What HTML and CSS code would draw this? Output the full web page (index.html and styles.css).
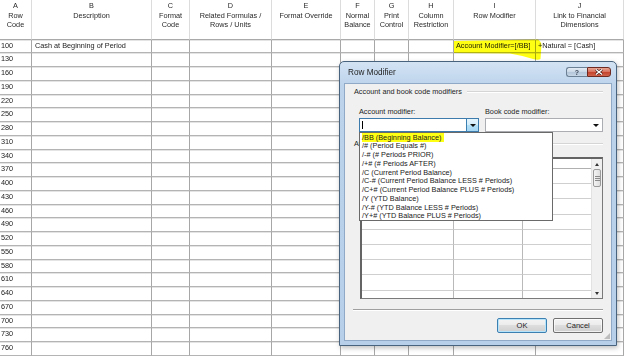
FILE: index.html
```html
<!DOCTYPE html>
<html lang="en">
<head>
    <meta charset="UTF-8">
    <title>Row Definition - Row Modifier</title>
    <link rel="stylesheet" href="styles.css">
</head>
<body>
    <!-- Row definition sheet -->
    <div class="sheet">
        <div class="sheet-row sheet-head">
            <span>A<br>Row<br>Code</span>
            <span>B<br>Description</span>
            <span>C<br>Format<br>Code</span>
            <span>D<br>Related Formulas /<br>Rows / Units</span>
            <span>E<br>Format Override</span>
            <span>F<br>Normal<br>Balance</span>
            <span>G<br>Print<br>Control</span>
            <span>H<br>Column<br>Restriction</span>
            <span>I<br>Row Modifier</span>
            <span>J<br>Link to Financial<br>Dimensions</span>
        </div>
        <div class="sheet-row"><span>100</span><span class="desc">Cash at Beginning of Period</span><span></span><span></span><span></span><span></span><span></span><span></span><span>Account Modifier=[/BB]</span><span>+Natural = [Cash]</span></div>
        <div class="sheet-row"><span>130</span><span></span><span></span><span></span><span></span><span></span><span></span><span></span><span></span><span></span></div>
        <div class="sheet-row"><span>160</span><span></span><span></span><span></span><span></span><span></span><span></span><span></span><span></span><span></span></div>
        <div class="sheet-row"><span>190</span><span></span><span></span><span></span><span></span><span></span><span></span><span></span><span></span><span></span></div>
        <div class="sheet-row"><span>220</span><span></span><span></span><span></span><span></span><span></span><span></span><span></span><span></span><span></span></div>
        <div class="sheet-row"><span>250</span><span></span><span></span><span></span><span></span><span></span><span></span><span></span><span></span><span></span></div>
        <div class="sheet-row"><span>280</span><span></span><span></span><span></span><span></span><span></span><span></span><span></span><span></span><span></span></div>
        <div class="sheet-row"><span>310</span><span></span><span></span><span></span><span></span><span></span><span></span><span></span><span></span><span></span></div>
        <div class="sheet-row"><span>340</span><span></span><span></span><span></span><span></span><span></span><span></span><span></span><span></span><span></span></div>
        <div class="sheet-row"><span>370</span><span></span><span></span><span></span><span></span><span></span><span></span><span></span><span></span><span></span></div>
        <div class="sheet-row"><span>400</span><span></span><span></span><span></span><span></span><span></span><span></span><span></span><span></span><span></span></div>
        <div class="sheet-row"><span>430</span><span></span><span></span><span></span><span></span><span></span><span></span><span></span><span></span><span></span></div>
        <div class="sheet-row"><span>460</span><span></span><span></span><span></span><span></span><span></span><span></span><span></span><span></span><span></span></div>
        <div class="sheet-row"><span>490</span><span></span><span></span><span></span><span></span><span></span><span></span><span></span><span></span><span></span></div>
        <div class="sheet-row"><span>520</span><span></span><span></span><span></span><span></span><span></span><span></span><span></span><span></span><span></span></div>
        <div class="sheet-row"><span>550</span><span></span><span></span><span></span><span></span><span></span><span></span><span></span><span></span><span></span></div>
        <div class="sheet-row"><span>580</span><span></span><span></span><span></span><span></span><span></span><span></span><span></span><span></span><span></span></div>
        <div class="sheet-row"><span>610</span><span></span><span></span><span></span><span></span><span></span><span></span><span></span><span></span><span></span></div>
        <div class="sheet-row"><span>640</span><span></span><span></span><span></span><span></span><span></span><span></span><span></span><span></span><span></span></div>
        <div class="sheet-row"><span>670</span><span></span><span></span><span></span><span></span><span></span><span></span><span></span><span></span><span></span></div>
        <div class="sheet-row"><span>700</span><span></span><span></span><span></span><span></span><span></span><span></span><span></span><span></span><span></span></div>
        <div class="sheet-row"><span>730</span><span></span><span></span><span></span><span></span><span></span><span></span><span></span><span></span><span></span></div>
        <div class="sheet-row"><span>760</span><span></span><span></span><span></span><span></span><span></span><span></span><span></span><span></span><span></span></div>
    </div>

    <!-- Highlighter stroke over the row modifier cell -->
    <svg class="marker" width="94" height="26" viewBox="0 0 94 26">
        <path d="M2,3 L86,1.5 Q89,3 89.5,7 L88.5,21 Q86,22.5 81,21 Q70,17.5 58,15.5 L2,15 Z" fill="#ffff14"/>
    </svg>

    <!-- Row Modifier dialog -->
    <div class="dialog">
        <div class="titlebar">
            <span class="title">Row Modifier</span>
            <div class="caption-btns">
                <span class="cap help">?</span>
                <span class="cap close">
                    <svg width="8" height="6" viewBox="0 0 8 6">
                        <path d="M1,0.5 L7,5.5 M7,0.5 L1,5.5" stroke="#3a1410" stroke-width="2.6"/>
                        <path d="M1,0.5 L7,5.5 M7,0.5 L1,5.5" stroke="#fff" stroke-width="1.4"/>
                    </svg>
                </span>
            </div>
        </div>

        <div class="client">
            <div class="group-head"><span>Account and book code modifiers</span></div>

            <div class="fields">
                <div class="field account">
                    <label>Account modifier:</label>
                    <div class="combo focused">
                        <span class="caret"></span>
                        <span class="drop-btn"><i class="arrow"></i></span>
                    </div>
                </div>
                <div class="field book">
                    <label>Book code modifier:</label>
                    <div class="combo">
                        <span class="drop-btn plain"><i class="arrow"></i></span>
                    </div>
                </div>
            </div>

            <div class="group-head second"><span>Attributes</span></div>

            <div class="attr-grid">
                <div class="attr-cells">
                    <div class="attr-row attr-head"><span></span><span></span><span></span></div>
                    <div class="attr-row"><span></span><span></span><span></span></div>
                    <div class="attr-row"><span></span><span></span><span></span></div>
                    <div class="attr-row"><span></span><span></span><span></span></div>
                    <div class="attr-row"><span></span><span></span><span></span></div>
                    <div class="attr-row"><span></span><span></span><span></span></div>
                    <div class="attr-row"><span></span><span></span><span></span></div>
                    <div class="attr-row"><span></span><span></span><span></span></div>
                    <div class="attr-row"><span></span><span></span><span></span></div>
                    <div class="attr-row"><span></span><span></span><span></span></div>
                </div>
                <div class="scrollbar">
                    <span class="sb-btn"><i class="up"></i></span>
                    <span class="sb-thumb"><b></b><b></b><b></b></span>
                    <span class="sb-track"></span>
                    <span class="sb-btn"><i class="down"></i></span>
                </div>
            </div>

            <div class="separator"></div>

            <div class="buttons">
                <button class="btn default">OK</button>
                <button class="btn">Cancel</button>
            </div>

            <!-- Open account modifier list -->
            <ul class="droplist">
                <li><mark>/BB (Beginning Balance)</mark></li>
                <li>/# (Period Equals #)</li>
                <li>/-# (# Periods PRIOR)</li>
                <li>/+# (# Periods AFTER)</li>
                <li>/C (Current Period Balance)</li>
                <li>/C-# (Current Period Balance LESS # Periods)</li>
                <li>/C+# (Current Period Balance PLUS # Periods)</li>
                <li>/Y (YTD Balance)</li>
                <li>/Y-# (YTD Balance LESS # Periods)</li>
                <li>/Y+# (YTD Balance PLUS # Periods)</li>
            </ul>

            <span class="grip"></span>
        </div>
    </div>
</body>
</html>
```

FILE: styles.css
```css
* {
    margin: 0;
    padding: 0;
    box-sizing: border-box;
}

body {
    width: 624px;
    height: 356px;
    overflow: hidden;
    position: relative;
    background: #ffffff;
    font-family: 'Liberation Sans', Arial, sans-serif;
    font-size: 7.3px;
    color: #1c1c1c;
}

/* Sheet */
.sheet {
    width: 624px;
}

.sheet-row {
    display: grid;
    grid-template-columns: 32px 120px 38px 82px 69px 34px 34px 45px 82px 88px;
    height: 13.75px;
}

.sheet-row span {
    border-right: 1px solid #a7a7a7;
    border-bottom: 1px solid #b4b4b4;
    box-shadow: inset 0 1px 0 #e4e4e4;
    line-height: 12.5px;
    padding-left: 2px;
    white-space: nowrap;
    overflow: hidden;
}

.sheet-row span:first-child {
    padding-left: 1px;
}

.sheet-row .desc {
    padding-left: 3px;
}

.sheet-head {
    height: 39.5px;
}

.sheet-head span {
    border-right-color: #dcdcdc;
    border-bottom-color: #a9a9a9;
    box-shadow: none;
    text-align: center;
    line-height: 9.6px;
    padding: 1px 0 0;
    white-space: normal;
    color: #2a2a2a;
}

.sheet-head span:first-child {
    padding-left: 0;
}

.marker {
    position: absolute;
    left: 452px;
    top: 38px;
    mix-blend-mode: multiply;
}

/* Dialog window */
.dialog {
    position: absolute;
    left: 339px;
    top: 61px;
    width: 278px;
    height: 285px;
    border: 1px solid #47637d;
    border-radius: 5px 5px 0 0;
    background: linear-gradient(#d3e3f4, #bcd3eb 24px, #b7cfe9);
    padding: 0 4px 4px;
    display: flex;
    flex-direction: column;
    box-shadow: 1px 2px 5px rgba(0, 0, 0, 0.25);
}

.titlebar {
    height: 21px;
    display: flex;
    justify-content: space-between;
    align-items: flex-start;
    padding: 5px 1px 0 4px;
}

.title {
    font-size: 8.2px;
    line-height: 12px;
    color: #1e1e1e;
}

.caption-btns {
    display: flex;
}

.cap {
    height: 10px;
    display: flex;
    align-items: center;
    justify-content: center;
    border: 1px solid #6b7f95;
}

.help {
    width: 21px;
    border-radius: 3px 0 0 3px;
    border-right: none;
    background: linear-gradient(#e4ecf5, #c9d7e6 50%, #b3c5d9 50%, #c6d6e7);
    color: #3d4a5a;
    font-size: 7px;
    font-weight: bold;
}

.close {
    width: 24px;
    border-radius: 0 3px 3px 0;
    border-color: #6e2a20;
    background: linear-gradient(#e8a493, #d66f5c 50%, #c4412b 50%, #d0634c);
}

.close svg {
    display: block;
}

.client {
    flex: 1;
    position: relative;
    background: #f0f0f0;
    border: 1px solid #8fa9c6;
    padding: 3px 8px 0 9px;
    display: flex;
    flex-direction: column;
}

.group-head {
    height: 10px;
    display: flex;
    align-items: center;
    line-height: 10px;
    color: #1e1e1e;
}

.group-head::after {
    content: '';
    flex: 1;
    margin-left: 5px;
    border-top: 1px solid #d5d5d5;
    border-bottom: 1px solid #ffffff;
}

.group-head.second {
    margin-top: 7px;
}

.fields {
    display: flex;
    gap: 6px;
    margin: 10px 0 0 5px;
}

.field label {
    display: block;
    height: 10px;
    line-height: 10px;
    margin-bottom: 1px;
    color: #1e1e1e;
}

.field.account {
    width: 120px;
}

.field.book {
    width: 118px;
}

.combo {
    height: 14px;
    background: #ffffff;
    border: 1px solid #abadb3;
    position: relative;
    display: flex;
    justify-content: flex-end;
}

.combo.focused {
    border-color: #3d7bad;
}

.caret {
    position: absolute;
    left: 2px;
    top: 2px;
    width: 1px;
    height: 8px;
    background: #000000;
}

.drop-btn {
    width: 12px;
    height: 100%;
    display: flex;
    align-items: center;
    justify-content: center;
    background: linear-gradient(#e6f5fd, #d3edfb 50%, #b5e0f8 50%, #a6d8f4);
    border-left: 1px solid #3c7fb1;
}

.drop-btn.plain {
    background: none;
    border-left: none;
}

.arrow {
    width: 0;
    height: 0;
    border-left: 3px solid transparent;
    border-right: 3px solid transparent;
    border-top: 3px solid #111111;
}

/* Attributes grid */
.attr-grid {
    margin: 8px 0 0 6px;
    height: 142px;
    display: flex;
    background: #ffffff;
    border: 1px solid #7a7a7a;
    border-left: 2px solid #646464;
    border-top: 2px solid #646464;
    overflow: hidden;
}

.attr-cells {
    flex: 1;
}

.attr-row {
    display: grid;
    grid-template-columns: 92px 69px 1fr;
    height: 15.2px;
}

.attr-row span {
    border-right: 1px solid #b9b9b9;
    border-bottom: 1px solid #cfcfcf;
}

.attr-row span:last-child {
    border-right: none;
}

.attr-head {
    height: 10px;
}

.attr-head span {
    border-bottom-color: #b0b0b0;
}

.scrollbar {
    width: 11px;
    display: flex;
    flex-direction: column;
    background: #f0f0f0;
    border-left: 1px solid #e2e2e2;
}

.sb-btn {
    height: 10px;
    display: flex;
    align-items: center;
    justify-content: center;
}

.sb-btn i {
    width: 0;
    height: 0;
    border-left: 2.5px solid transparent;
    border-right: 2.5px solid transparent;
}

.sb-btn .up {
    border-bottom: 3px solid #333333;
}

.sb-btn .down {
    border-top: 3px solid #333333;
}

.sb-thumb {
    height: 18px;
    margin: 0 1px;
    border: 1px solid #9a9a9a;
    border-radius: 2px;
    background: linear-gradient(90deg, #f4f4f4, #dedede);
    display: flex;
    flex-direction: column;
    align-items: center;
    justify-content: center;
    gap: 1px;
}

.sb-thumb b {
    width: 5px;
    height: 1px;
    background: #8a8a8a;
}

.sb-track {
    flex: 1;
}

.separator {
    margin: 10px 0 0 -1px;
    border-top: 1px solid #a0a0a0;
    border-bottom: 1px solid #ffffff;
}

.buttons {
    display: flex;
    justify-content: flex-end;
    gap: 6px;
    margin-top: 7px;
}

.btn {
    width: 50px;
    height: 15px;
    font-family: 'Liberation Sans', Arial, sans-serif;
    font-size: 7.6px;
    color: #1e1e1e;
    border: 1px solid #707070;
    border-radius: 2px;
    background: linear-gradient(#f3f3f3, #ebebeb 50%, #dddddd 50%, #cfcfcf);
    box-shadow: inset 0 0 0 1px rgba(255, 255, 255, 0.7);
}

.btn.default {
    border-color: #3c7fb1;
    box-shadow: inset 0 0 0 1px #b6e4fb;
}

/* Open combo list */
.droplist {
    position: absolute;
    left: 14px;
    top: 48px;
    width: 194px;
    height: 89px;
    list-style: none;
    background: #ffffff;
    border: 1px solid #6a6a6a;
    padding-top: 0.5px;
}

.droplist li {
    height: 8.75px;
    line-height: 8.75px;
    padding-left: 2px;
    white-space: nowrap;
    color: #1a1a1a;
}

.droplist mark {
    background: #ffff14;
    color: inherit;
    padding-right: 2px;
}

.grip {
    position: absolute;
    right: 1px;
    bottom: 1px;
    width: 6px;
    height: 6px;
    background: radial-gradient(circle, #a0a0a0 0.6px, transparent 0.9px) 0 0 / 2px 2px;
    clip-path: polygon(100% 0, 100% 100%, 0 100%);
}
```
